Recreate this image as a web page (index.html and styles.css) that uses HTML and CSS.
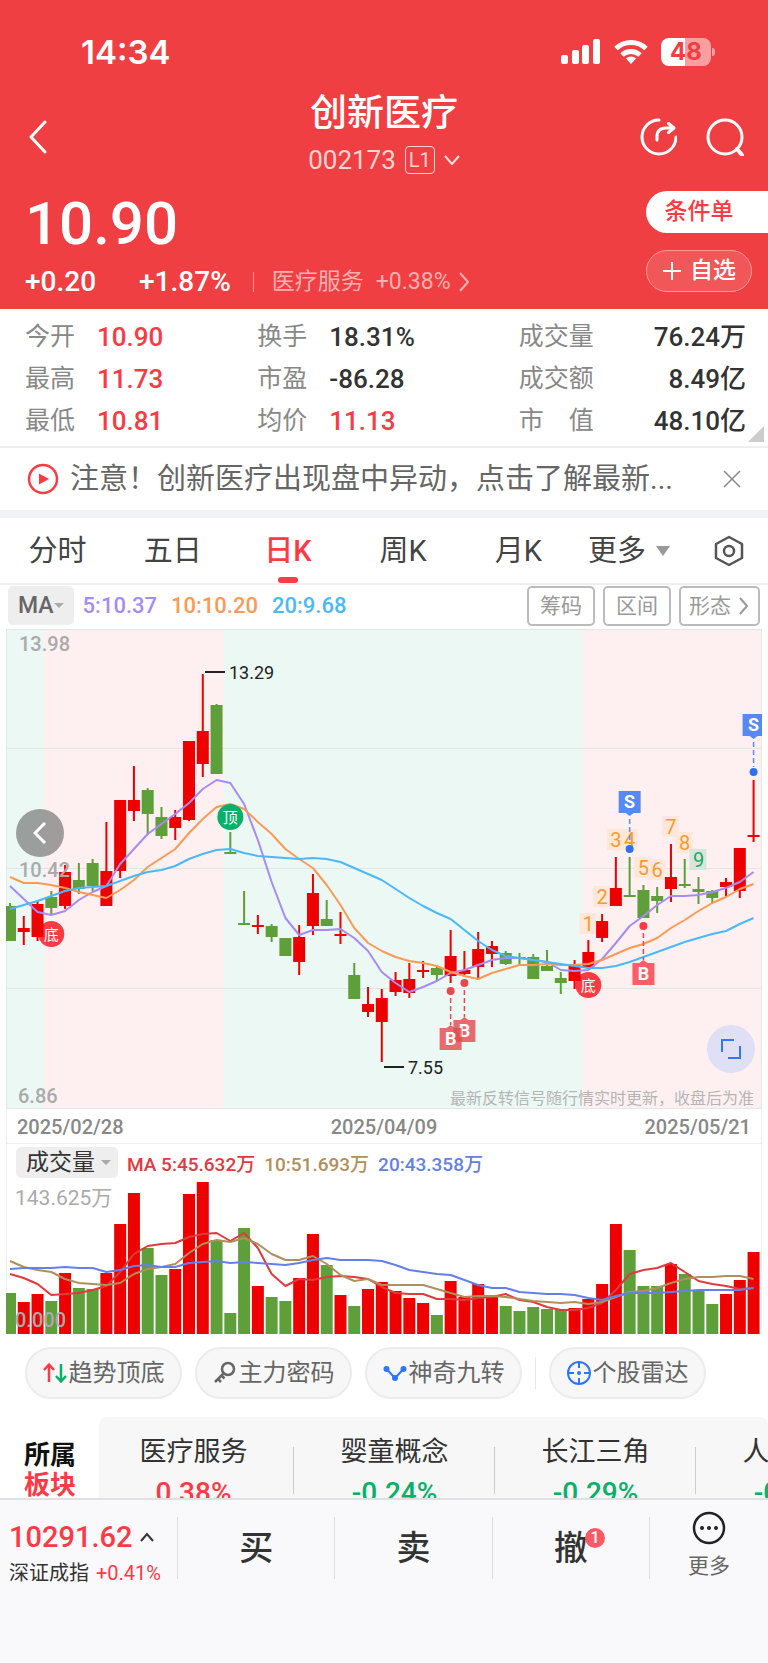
FILE: index.html
```html
<!DOCTYPE html>
<html lang="zh-CN">
<head>
  <meta charset="UTF-8">
  <meta name="viewport" content="width=device-width, initial-scale=1.0">
  <title>创新医疗 002173</title>
  <link rel="stylesheet" href="styles.css">
</head>
<body>

  <header class="top">
    <div class="status">
      <span class="clock">14:34</span>
      <div class="status-icons">
        <svg width="40" height="26" viewBox="0 0 40 26" fill="#fff">
          <rect x="0" y="16" width="7" height="9" rx="2"/>
          <rect x="11" y="11" width="7" height="14" rx="2"/>
          <rect x="21" y="6" width="7" height="19" rx="2"/>
          <rect x="32" y="0" width="7" height="25" rx="2"/>
        </svg>
        <svg width="34" height="26" viewBox="0 0 34 26" fill="none" stroke="#fff" stroke-width="5">
          <path d="M2 9.500a21.500 21.500 0 0 1 30 0"/>
          <path d="M8 16a13 13 0 0 1 18 0"/>
          <path d="M17 25l-5-5.500a7.500 7.500 0 0 1 10 0z" fill="#fff" stroke="none"/>
        </svg>
        <div class="battery">48</div>
      </div>
    </div>

    <div class="title-bar">
      <button class="icon-btn" aria-label="返回">
        <svg width="24" height="34" viewBox="0 0 24 34" fill="none" stroke="#fff" stroke-width="3" stroke-linecap="round" stroke-linejoin="round"><path d="M21 2L7 17l14 15"/></svg>
      </button>
      <div class="stock">
        <h1>创新医疗</h1>
        <div class="code">
          <span>002173</span>
          <span class="level">L1</span>
          <svg width="16" height="12" viewBox="0 0 16 12" fill="none" stroke="#fff" stroke-opacity=".85" stroke-width="2"><path d="M1 2l7 8 7-8"/></svg>
        </div>
      </div>
      <div class="title-actions">
        <button class="icon-btn" aria-label="分享">
          <svg width="38" height="38" viewBox="0 0 38 38" fill="none" stroke="#fff" stroke-width="3" stroke-linecap="round" stroke-linejoin="round"><path d="M20 2a17 17 0 1 0 17 17"/><path d="M18 22v-3c0-6 3-9 9-9h7M29.500 5.500l5.500 4.500-5.500 4.500"/></svg>
        </button>
        <button class="icon-btn" aria-label="搜索">
          <svg width="38" height="38" viewBox="0 0 38 38" fill="none" stroke="#fff" stroke-width="3" stroke-linecap="round"><circle cx="19" cy="19" r="17"/><path d="M31 31l5 6" stroke-width="4"/></svg>
        </button>
      </div>
    </div>

    <div class="quote">
      <div>
        <div class="price">10.90</div>
        <div class="change">
          <span class="diff">+0.20</span>
          <span class="rate">+1.87%</span>
          <a class="industry" href="#">
            医疗服务 <span>+0.38%</span>
            <svg width="10" height="20" viewBox="0 0 10 20" fill="none" stroke="currentColor" stroke-width="2"><path d="M1 1l8 9-8 9"/></svg>
          </a>
        </div>
      </div>
      <div class="quote-actions">
        <button class="order-btn">条件单</button>
        <button class="fav-btn">
          <svg width="20" height="20" viewBox="0 0 20 20" stroke="#fff" stroke-width="2"><path d="M10 1v18M1 10h18"/></svg>
          自选
        </button>
      </div>
    </div>
  </header>

  <main>
    <section class="stats">
      <dl>
        <div><dt>今开</dt><dd class="up">10.90</dd></div>
        <div><dt>最高</dt><dd class="up">11.73</dd></div>
        <div><dt>最低</dt><dd class="up">10.81</dd></div>
      </dl>
      <dl>
        <div><dt>换手</dt><dd>18.31%</dd></div>
        <div><dt>市盈</dt><dd>-86.28</dd></div>
        <div><dt>均价</dt><dd class="up">11.13</dd></div>
      </dl>
      <dl class="wide">
        <div><dt>成交量</dt><dd>76.24万</dd></div>
        <div><dt>成交额</dt><dd>8.49亿</dd></div>
        <div><dt>市　值</dt><dd>48.10亿</dd></div>
      </dl>
      <i class="corner"></i>
    </section>

    <section class="notice">
      <svg width="32" height="32" viewBox="0 0 32 32"><circle cx="16" cy="16" r="14" fill="none" stroke="#fb3a45" stroke-width="2.500"/><path d="M12 10.500l10 5.500-10 5.500z" fill="#fb3a45"/></svg>
      <p>注意！创新医疗出现盘中异动，点击了解最新...</p>
      <button class="icon-btn" aria-label="关闭">
        <svg width="18" height="18" viewBox="0 0 18 18" stroke="#888" stroke-width="1.500"><path d="M1 1l16 16M17 1L1 17"/></svg>
      </button>
    </section>

    <nav class="tabs">
      <button>分时</button>
      <button>五日</button>
      <button class="active">日K</button>
      <button>周K</button>
      <button>月K</button>
      <button class="more">更多<i class="tri"></i></button>
      <button class="setting" aria-label="设置">
        <svg width="30" height="32" viewBox="0 0 30 32" fill="none" stroke="#555" stroke-width="2.500" stroke-linejoin="round"><path d="M15 2l13 7v14l-13 7-13-7V9z"/><circle cx="15" cy="16" r="5"/></svg>
      </button>
    </nav>

    <div class="ma-bar">
      <button class="chip">MA<i class="tri small"></i></button>
      <span class="ma5">5:10.37</span>
      <span class="ma10">10:10.20</span>
      <span class="ma20">20:9.68</span>
      <div class="tools">
        <button>筹码</button>
        <button>区间</button>
        <button>形态 <svg width="10" height="18" viewBox="0 0 10 18" fill="none" stroke="#999" stroke-width="2"><path d="M1 1l7 8-7 8"/></svg></button>
      </div>
    </div>

    <div class="chart">
      <svg id="kline" viewBox="0 0 756 480"></svg>
      <button class="round prev" aria-label="向前">
        <svg width="14" height="22" viewBox="0 0 14 22" fill="none" stroke="#fff" stroke-width="3"><path d="M12 1L2 11l10 10"/></svg>
      </button>
      <button class="round full" aria-label="全屏">
        <svg width="22" height="22" viewBox="0 0 22 22" fill="none" stroke="#3478f6" stroke-width="2"><path d="M14 2H2v12M8 20h12V8"/></svg>
      </button>
    </div>
    <div class="dates"><span>2025/02/28</span><span>2025/04/09</span><span>2025/05/21</span></div>

    <div class="volume">
      <div class="vol-bar">
        <button class="chip">成交量<i class="tri small"></i></button>
        <span class="v5">MA 5:45.632万</span>
        <span class="v10">10:51.693万</span>
        <span class="v20">20:43.358万</span>
      </div>
      <svg id="vol" viewBox="0 0 756 152"></svg>
    </div>

    <div class="pills">
      <button>
        <svg width="24" height="24" viewBox="0 0 24 24" fill="none" stroke-width="2.500"><path d="M6 21V4M1 9l5-5.500L11 9" stroke="#fb3a45"/><path d="M18 3v17M13 15l5 5.500 5-5.500" stroke="#08b069"/></svg>趋势顶底
      </button>
      <button>
        <svg width="24" height="24" viewBox="0 0 24 24" fill="none" stroke="#666" stroke-width="2.500"><circle cx="15" cy="8" r="6"/><path d="M11 12L2 21M5 18l3 3M8.500 14.500l3 3"/></svg>主力密码
      </button>
      <button>
        <svg width="24" height="24" viewBox="0 0 24 24" fill="#2f74ff"><path d="M3.500 8l8.500 9 8.500-9" fill="none" stroke="#2f74ff" stroke-width="2"/><circle cx="3.500" cy="8" r="3"/><circle cx="12" cy="17" r="3"/><circle cx="20.500" cy="8" r="3"/></svg>神奇九转
      </button>
      <i class="sep"></i>
      <button>
        <svg width="24" height="24" viewBox="0 0 24 24" fill="none" stroke="#2f74ff" stroke-width="2"><circle cx="12" cy="12" r="11"/><path d="M12 1v6M12 17v6M1 12h6M17 12h6"/><circle cx="12" cy="12" r="2" fill="#2f74ff" stroke="none"/></svg>个股雷达
      </button>
    </div>

    <section class="sectors">
      <h2>所属<br><em>板块</em></h2>
      <ul>
        <li><a href="#">医疗服务</a><span class="up">0.38%</span></li>
        <li><a href="#">婴童概念</a><span class="down">-0.24%</span></li>
        <li><a href="#">长江三角</a><span class="down">-0.29%</span></li>
        <li><a href="#">人工智能</a><span class="down">-0.46%</span></li>
      </ul>
    </section>
  </main>

  <footer class="bottom">
    <div class="index">
      <div class="index-value">10291.62
        <svg width="14" height="10" viewBox="0 0 14 10" fill="none" stroke="#333" stroke-width="2"><path d="M1 9l6-7 6 7"/></svg>
      </div>
      <div class="index-name">深证成指 <span>+0.41%</span></div>
    </div>
    <button class="trade">买</button>
    <button class="trade">卖</button>
    <button class="trade"><span class="cancel">撤<b>1</b></span></button>
    <button class="menu">
      <svg width="34" height="34" viewBox="0 0 34 34"><circle cx="17" cy="17" r="15" fill="none" stroke="#222" stroke-width="2.500"/><g fill="#222"><circle cx="10" cy="17" r="2"/><circle cx="17" cy="17" r="2"/><circle cx="24" cy="17" r="2"/></g></svg>
      更多
    </button>
  </footer>

  <script src="chart.js"></script>
</body>
</html>
```
FILE: styles.css
```css
* {
  box-sizing: border-box;
}

body {
  margin: 0;
  height: 100vh;
  display: flex;
  flex-direction: column;
  overflow: hidden;
  background: #fff;
  color: #333;
  font-family: Roboto, "Noto Sans CJK SC", sans-serif;
}

h1, h2, p, dl, dd, ul {
  margin: 0;
  padding: 0;
}

a {
  color: inherit;
  text-decoration: none;
}

button {
  margin: 0;
  padding: 0;
  border: none;
  background: none;
  color: inherit;
  font-family: inherit;
  cursor: pointer;
}

svg {
  display: block;
  flex: none;
}

.up { color: #fb3a45; }
.down { color: #08b069; }

/* header */
.top {
  flex: none;
  padding-top: 21px;
  background: #f03f42;
  color: #fff;
}

.status {
  display: flex;
  justify-content: space-between;
  align-items: center;
  height: 62px;
  padding: 0 57px 0 81px;
}

.clock {
  font: 600 33px/40px Inter, sans-serif;
}

.status-icons {
  display: flex;
  align-items: center;
  gap: 13px;
}

.battery {
  position: relative;
  width: 50px;
  height: 28px;
  border-radius: 8px;
  background: linear-gradient(90deg, #fff 48%, rgba(255, 255, 255, .5) 48%);
  color: #f03f42;
  font: 700 24px/28px Inter, sans-serif;
  text-align: center;
}

.battery::after {
  content: "";
  position: absolute;
  right: -4px;
  top: 10px;
  width: 3px;
  height: 8px;
  border-radius: 0 3px 3px 0;
  background: rgba(255, 255, 255, .5);
}

.title-bar {
  display: grid;
  grid-template-columns: 1fr auto 1fr;
  align-items: center;
  padding: 9px 24px 0;
}

.title-bar .icon-btn {
  justify-self: start;
  margin-top: 4px;
}

.stock {
  text-align: center;
}

h1 {
  font-size: 37px;
  font-weight: 500;
  line-height: 44px;
}

.code {
  display: flex;
  align-items: center;
  gap: 9px;
  margin-top: 6px;
  font-size: 26px;
  line-height: 36px;
  color: #ffd5d5;
}

.level {
  width: 30px;
  height: 28px;
  border: 1px solid #ffd5d5;
  border-radius: 4px;
  font-size: 20px;
  line-height: 26px;
}

.title-actions {
  display: flex;
  justify-content: flex-end;
  gap: 29px;
}

.quote {
  display: flex;
  justify-content: space-between;
  height: 131px;
  padding-left: 25px;
}

.price {
  margin-top: 14px;
  font-size: 60px;
  font-weight: 500;
  line-height: 64px;
}

.change {
  display: flex;
  align-items: center;
  margin-top: 8px;
  font-size: 28px;
  font-weight: 500;
  line-height: 36px;
}

.rate {
  margin-left: 43px;
}

.industry {
  display: flex;
  align-items: center;
  margin-left: 22px;
  padding-left: 18px;
  border-left: 1px solid #f99;
  font-size: 23px;
  font-weight: 400;
  line-height: 20px;
  color: #ffb0b0;
}

.industry span {
  margin: 0 8px 0 12px;
}

.quote-actions {
  display: flex;
  flex-direction: column;
  gap: 17px;
  padding-top: 13px;
}

.order-btn {
  width: 122px;
  height: 42px;
  padding-right: 16px;
  border-radius: 21px 0 0 21px;
  background: #fff;
  color: #fb3a45;
  font-size: 23px;
  font-weight: 500;
  line-height: 40px;
}

.fav-btn {
  display: flex;
  align-items: center;
  justify-content: center;
  gap: 8px;
  width: 106px;
  height: 42px;
  border: 1px solid #f99;
  border-radius: 21px;
  background: rgba(255, 255, 255, .12);
  font-size: 23px;
  font-weight: 500;
  line-height: 38px;
}

main {
  flex: 1;
  min-height: 0;
  overflow: hidden;
}

/* quote numbers */
.stats {
  position: relative;
  display: grid;
  grid-template-columns: 232fr 261fr 227fr;
  padding: 7px 22px 4px 25px;
  border-bottom: 2px solid #eee;
}

.stats dl > div {
  display: flex;
  line-height: 42px;
}

.stats dt {
  width: 72px;
  font-size: 25px;
  color: #888;
}

.stats dd {
  font-size: 26px;
  font-weight: 500;
}

.stats .wide > div {
  justify-content: space-between;
}

.stats .wide dt {
  width: auto;
}

.corner {
  position: absolute;
  right: 4px;
  bottom: 4px;
  border: 8px solid;
  border-color: transparent #ccc #ccc transparent;
}

.notice {
  display: flex;
  align-items: center;
  gap: 11px;
  height: 70px;
  padding: 0 27px;
  border-bottom: 8px solid #f1f3f8;
}

.notice p {
  flex: 1;
  font-size: 29px;
  line-height: 40px;
  color: #666;
  white-space: nowrap;
}

/* period tabs */
.tabs {
  display: flex;
  height: 67px;
  border-bottom: 2px solid #eee;
}

.tabs button {
  position: relative;
  flex: 0 0 15%;
  font-size: 29px;
  line-height: 64px;
  color: #444;
}

.tabs .active {
  color: #fb3a45;
  font-weight: 500;
}

.tabs .active::after {
  content: "";
  position: absolute;
  left: 50%;
  bottom: 0;
  width: 20px;
  height: 6px;
  margin-left: -10px;
  border-radius: 3px;
  background: #fb3a45;
}

.tabs .more {
  display: flex;
  align-items: center;
  gap: 10px;
  flex: 1;
  padding-left: 12px;
}

.tabs .setting {
  display: flex;
  align-items: center;
  flex: none;
  padding-right: 24px;
}

.tri {
  border: 7px solid transparent;
  border-top: 10px solid #999;
  border-bottom: none;
}

.tri.small {
  border-width: 5px 5px 0;
  border-top-color: #aaa;
}

.chip {
  display: flex;
  align-items: center;
  border-radius: 5px;
  background: #eee;
}

/* moving averages */
.ma-bar {
  display: flex;
  align-items: center;
  gap: 14px;
  height: 44px;
  padding: 0 8px 3px;
  font-size: 22px;
  font-weight: 500;
}

.ma-bar .chip {
  height: 39px;
  margin-right: -5px;
  padding: 0 10px;
  font-size: 23px;
  font-weight: 500;
  color: #666;
}

.ma5 { color: #a78bf5; }
.ma10 { color: #fa9a56; }
.ma20 { color: #4bb8fa; }

.tools {
  display: flex;
  gap: 8px;
  margin-left: auto;
}

.tools button {
  display: flex;
  align-items: center;
  gap: 8px;
  height: 40px;
  padding: 0 11px;
  border: 2px solid #bbb;
  border-radius: 5px;
  font-size: 21px;
  line-height: 34px;
  color: #999;
}

.tools button:last-child {
  padding: 0 9px 0 8px;
}

.chart {
  position: relative;
  margin: 0 6px;
}

.chart svg text, .volume svg text {
  font-family: Roboto, "Noto Sans CJK SC", sans-serif;
}

.round {
  position: absolute;
  display: flex;
  align-items: center;
  justify-content: center;
  width: 48px;
  height: 48px;
  border-radius: 50%;
}

.prev {
  left: 10px;
  top: 180px;
  background: rgba(110, 110, 110, .65);
}

.full {
  right: 7px;
  bottom: 36px;
  background: #dfdff5;
}

.dates {
  display: flex;
  justify-content: space-between;
  margin: 0 6px;
  padding: 2px 10px 0;
  border: 1px solid #eee;
  border-top: none;
  font-size: 20px;
  font-weight: 500;
  line-height: 32px;
  color: #888;
}

.volume {
  margin: 0 6px;
  border: solid #eee;
  border-width: 0 1px;
}

.volume > svg {
  margin: 0 -1px;
}

.vol-bar {
  display: flex;
  align-items: center;
  gap: 9px;
  height: 38px;
  padding: 3px 9px 4px;
  font-size: 19px;
  font-weight: 500;
}

.vol-bar .chip {
  gap: 6px;
  height: 31px;
  padding: 0 7px 0 10px;
  font-size: 23px;
  line-height: 28px;
}

.v5 { color: #e0393e; }
.v10 { color: #b0905a; }
.v20 { color: #6480e8; }

.pills {
  display: flex;
  align-items: center;
  gap: 13px;
  padding: 13px 25px 18px;
}

.pills button {
  display: flex;
  align-items: center;
  justify-content: center;
  gap: 2px;
  width: 157px;
  height: 52px;
  border: 2px solid #ececec;
  border-radius: 26px;
  background: #f7f7f7;
  font-size: 24px;
  line-height: 46px;
  color: #666;
  white-space: nowrap;
}

.sep {
  width: 1px;
  height: 32px;
  background: #e8e8e8;
}

.sectors {
  display: flex;
}

.sectors h2 {
  flex: 0 0 99px;
  padding: 23px 0 0 24px;
  font-size: 26px;
  font-weight: 700;
  line-height: 30px;
  color: #111;
}

.sectors em {
  font-style: normal;
  color: #fb3a45;
}

.sectors ul {
  display: flex;
  flex: 1;
  min-width: 0;
  overflow: hidden;
  border-radius: 8px 8px 0 0;
  background: #f7f7f7;
  list-style: none;
}

.sectors li {
  position: relative;
  flex: 0 0 201px;
  padding-top: 15px;
  text-align: center;
  font-size: 27px;
  line-height: 40px;
}

.sectors li:first-child {
  flex-basis: 195px;
  padding-right: 6px;
}

.sectors li::after {
  content: "";
  position: absolute;
  right: 0;
  top: 30px;
  width: 1px;
  height: 47px;
  background: #ccc;
}

.sectors a, .sectors span {
  display: block;
}

.sectors span {
  font-size: 28px;
  font-weight: 500;
  line-height: 42px;
}

/* trade bar */
.bottom {
  display: flex;
  flex: none;
  height: 165px;
  padding: 17px 0 86px;
  border-top: 2px solid #e0e0e3;
  background: #f9f9fc;
}

.index {
  flex: 0 0 177px;
  padding: 0 0 0 9px;
}

.index-value {
  display: flex;
  align-items: center;
  gap: 8px;
  font-size: 29px;
  font-weight: 500;
  line-height: 40px;
  color: #fb3a45;
}

.index-name {
  font-size: 20px;
  line-height: 32px;
  white-space: nowrap;
}

.index-name span {
  margin-left: 2px;
  color: #fb3a45;
}

.bottom button {
  height: 62px;
  border-left: 1px solid #ddd;
}

.bottom .trade {
  flex: 158;
  font-size: 34px;
  font-weight: 500;
  line-height: 58px;
}

.bottom .menu {
  display: flex;
  flex-direction: column;
  align-items: center;
  flex: 119;
  font-size: 21px;
  line-height: 30px;
  color: #666;
}

.menu svg {
  margin: -6px 0 6px;
}

.cancel {
  position: relative;
}

.cancel b {
  position: absolute;
  right: -17px;
  top: 0;
  width: 20px;
  height: 20px;
  border-radius: 50%;
  background: #fa5a63;
  color: #fff;
  font-size: 16px;
  font-weight: 500;
  line-height: 20px;
}
```
FILE: chart.js
```js
const RED = '#ee0000';
const GREEN = '#5f9f3a';
const STEP = 13.77;
const px = i => 4 + i * STEP;

// [up, high, body top, body bottom, low]
const candles = [
  [0,274,277,312,312],[1,287,299,303,316],[1,272,275,308,312],[0,262,268,279,286],[1,236,243,277,280],
  [0,234,251,260,265],[0,230,234,257,262],[1,193,242,277,277],[1,171,171,242,249],[1,137,171,182,192],
  [0,159,161,185,206],[0,178,188,207,210],[1,181,188,199,211],[1,112,112,191,192],[1,45,102,135,148],
  [0,75,76,145,145],[0,203,223,225,225],[0,262,294,296,296],[1,286,296,298,305],[0,295,297,308,313],
  [0,309,309,327,327],[1,296,308,333,346],[1,245,264,297,306],[0,271,290,297,297],[1,283,305,307,315],
  [0,334,346,370,370],[1,358,375,383,388],[1,360,369,393,433],[1,343,351,363,367],[1,334,350,364,369],
  [1,332,341,343,349],[0,338,339,346,352],[1,301,327,347,354],[1,322,341,345,346],[1,303,320,338,351],
  [1,312,317,325,338],[0,322,324,335,336],[0,324,328,330,336],[0,325,328,350,350],[0,321,337,342,342],
  [0,343,349,354,365],[1,331,336,352,360],[1,311,323,338,340],[1,285,292,309,313],[1,228,259,277,277],
  [0,228,266,268,268],[0,256,261,289,289],[0,258,267,272,284],[1,215,248,260,273],[0,230,255,257,259],
  [0,248,260,263,275],[0,261,262,269,274],[1,249,253,258,267],[1,219,219,262,269],[1,151,206,208,213]
];

const ma5 = [257,270,283,286,282,271,263,257,235,220,205,195,185,174,160,151,154,175,211,253,289,306,301,301,300,309,322,343,354,363,358,352,344,341,336,331,329,329,331,333,341,342,341,330,314,297,287,276,267,267,266,263,259,253,243];
const ma10 = [248,254,254,256,259,263,266,269,261,251,238,229,220,204,190,178,175,180,193,205,220,230,239,256,276,299,314,322,328,332,334,337,343,347,350,344,340,336,336,335,336,336,335,331,325,319,315,309,299,291,282,274,268,260,255];
const ma20 = [280,276,272,267,262,259,258,257,252,247,243,241,237,230,225,221,220,224,227,228,229,230,229,230,233,239,245,251,260,269,277,284,290,301,312,321,327,329,331,333,335,337,339,339,337,333,328,323,318,313,309,305,302,295,289];

const vols = [41,32,40,33,61,46,45,61,110,141,86,59,65,140,152,94,21,106,48,37,33,56,100,69,39,28,45,52,43,36,31,19,53,37,50,38,28,23,27,25,25,26,35,50,110,84,48,48,70,60,43,30,40,54,82];
const v5 = [92,96,102,113,112,111,108,104,90,72,64,62,61,55,52,51,59,51,66,92,104,97,98,95,94,95,97,105,111,112,112,117,117,118,116,115,112,118,120,125,128,128,126,121,108,92,88,86,81,90,99,102,104,107,106];
const v10 = [79,85,88,90,97,101,102,103,101,92,87,85,82,71,62,58,60,56,62,72,78,78,74,82,93,99,97,103,103,103,103,107,111,115,114,114,115,117,119,120,121,120,122,120,115,110,109,106,101,97,95,95,94,94,97];
const v20 = [87,86,86,86,85,86,86,90,88,84,83,85,85,81,80,79,81,80,81,82,83,81,78,76,78,78,78,79,83,88,90,92,93,98,103,106,106,110,111,112,112,113,116,118,114,111,111,111,110,109,108,108,108,108,106];

function rect(x, y, w, h, fill) {
  return `<rect x="${x}" y="${y}" width="${w}" height="${h}" fill="${fill}"/>`;
}

function text(x, y, str, size, fill, extra = '') {
  return `<text x="${x}" y="${y}" font-size="${size}" fill="${fill}" ${extra}>${str}</text>`;
}

function line(values, color) {
  const points = values.map((y, i) => `${px(i)},${y}`).join(' ');
  return `<polyline points="${points}" fill="none" stroke="${color}" stroke-width="2" stroke-linejoin="round"/>`;
}

// round top / bottom reversal marks
function mark(i, y, str, color) {
  return `<circle cx="${px(i)}" cy="${y}" r="13" fill="${color}"/>` +
    text(px(i), y + 6, str, 15, '#fff', 'text-anchor="middle"');
}

// B tags hang below the candle, S tags stand above it
function signal(i, dot, top, type, tagColor, dotColor) {
  const x = px(i);
  const buy = type === 'B';
  const y1 = buy ? dot + 7 : top + 28;
  const y2 = buy ? top - 3 : dot - 5;
  const tip = buy
    ? `${x - 4},${top} ${x},${top - 3} ${x + 4},${top}`
    : `${x - 4},${top + 22} ${x},${top + 25} ${x + 4},${top + 22}`;
  return `<g><path d="M${x} ${y1}V${y2}" stroke="${tagColor}" stroke-width="1.500" stroke-dasharray="5 3"/>
    <circle cx="${x}" cy="${dot}" r="4" fill="${dotColor}"/>
    <g opacity=".8">${rect(x - 11, top, 22, 22, dotColor)}<polygon points="${tip}" fill="${dotColor}"/></g>
    ${text(x, top + 17, type, 18, '#fff', 'text-anchor="middle" font-weight="700"')}</g>`;
}

function count(i, y, n) {
  const last = n === 9;
  return rect(px(i) - 9, y - 11, 17, 21, last ? '#d7e6da' : '#ffe8d9') +
    text(px(i), y + 7, n, 20, last ? '#1fa867' : '#fb9a2c', 'text-anchor="middle"');
}

let k = '';
k += rect(0, 0, 38, 480, '#ebf8f4') + rect(38, 0, 180, 480, '#fef0f0');
k += rect(218, 0, 358, 480, '#ebf8f4') + rect(576, 0, 180, 480, '#fef0f0');
[119, 239, 359].forEach(y => k += rect(0, y, 756, 1, '#e0e6e4'));
k += '<rect x=".5" y=".5" width="755" height="479" fill="none" stroke="#e2e8e6"/>';
k += mark(3, 305, '底', '#fb3a45') + mark(42, 356, '底', '#fb3a45');
[295, 268, 211, 211, 239, 241, 198, 214, 231].forEach((y, n) => k += count(42 + n, y, n + 1));

candles.forEach(([up, high, top, bottom, low], i) => {
  const color = up ? RED : GREEN;
  k += rect(px(i) - 1, high, 2, low - high, color);
  // flat candles still get a thin body
  k += rect(px(i) - 6, top, 12, Math.max(bottom - top, 2), color);
});

k += line(ma5, '#a78bf5') + line(ma10, '#fa9a56') + line(ma20, '#4bb8fa');
k += mark(16, 188, '顶', '#08b069');
k += signal(33, 354, 391, 'B', '#e5484f', '#e5484f');
k += signal(32, 362, 399, 'B', '#e5484f', '#e5484f');
k += signal(46, 297, 334, 'B', '#e5484f', '#fb3a45');
k += signal(45, 220, 162, 'S', '#5b8def', '#2f6ff2');
k += signal(54, 143, 85, 'S', '#5b8def', '#2f6ff2');
k += rect(199, 42, 20, 2, '#222') + text(223, 50, '13.29', 18, '#222');
k += rect(378, 437, 20, 2, '#222') + text(402, 445, '7.55', 18, '#222');
k += text(13, 22, '13.98', 20, '#aaa', 'font-weight="500"');
k += text(13, 248, '10.42', 20, '#aaa', 'font-weight="500"');
k += text(12, 474, '6.86', 20, '#aaa', 'font-weight="500"');
k += text(748, 475, '最新反转信号随行情实时更新，收盘后为准', 16, '#b5b5b5', 'text-anchor="end"');
document.getElementById('kline').innerHTML = k;

let v = '';
vols.forEach((h, i) => v += rect(px(i) - 6, 152 - h, 12, h, candles[i][0] ? RED : GREEN));
v += line(v5, '#e0393e') + line(v10, '#b0905a') + line(v20, '#6480e8');
v += text(9, 23, '143.625万', 21, '#aaa');
v += text(9, 145, '0.000', 20, '#aaa', 'font-weight="500"');
document.getElementById('vol').innerHTML = v;
```
